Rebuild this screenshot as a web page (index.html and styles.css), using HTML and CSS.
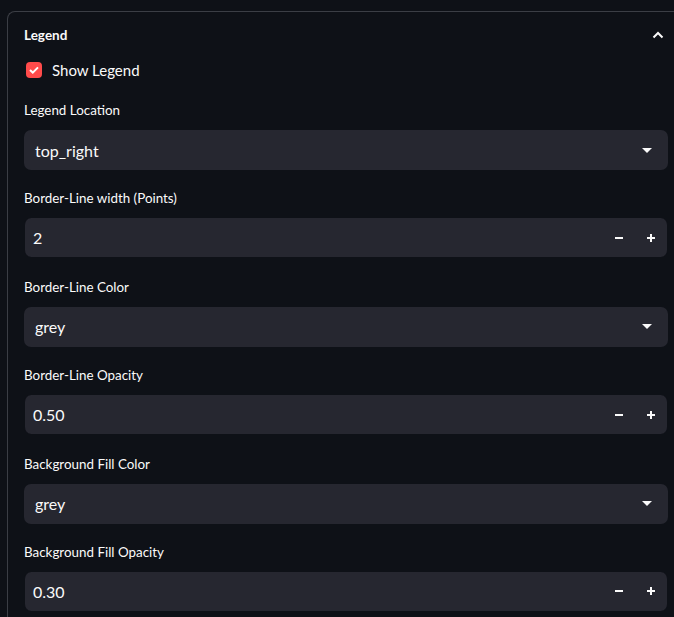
FILE: index.html
```html
<!DOCTYPE html>
<html>
<head>
<meta charset="utf-8">
<link rel="stylesheet" href="styles.css">
</head>
<body>
<div class="expander">
  <div class="exp-header">
    <span class="exp-title">Legend</span>
    <svg class="chevron" width="12" height="8" viewBox="0 0 12 8"><polyline points="1.5,6.5 6,2 10.5,6.5" fill="none" stroke="#fafafa" stroke-width="2"/></svg>
  </div>
  <div class="exp-body">
    <label class="checkbox-row">
      <span class="checkbox">
        <svg width="10" height="8" viewBox="0 0 10 8"><polyline points="1,4 3.8,6.6 9,1.4" fill="none" stroke="#fff" stroke-width="2"/></svg>
      </span>
      <span class="checkbox-label">Show Legend</span>
    </label>

    <div class="field">
      <div class="field-label">Legend Location</div>
      <div class="select"><span>top_right</span><span class="caret"></span></div>
    </div>
    <div class="field">
      <div class="field-label">Border-Line width (Points)</div>
      <div class="number"><span>2</span><span class="steps"><span class="minus"></span><span class="plus"></span></span></div>
    </div>
    <div class="field">
      <div class="field-label">Border-Line Color</div>
      <div class="select"><span>grey</span><span class="caret"></span></div>
    </div>
    <div class="field">
      <div class="field-label">Border-Line Opacity</div>
      <div class="number"><span>0.50</span><span class="steps"><span class="minus"></span><span class="plus"></span></span></div>
    </div>
    <div class="field">
      <div class="field-label">Background Fill Color</div>
      <div class="select"><span>grey</span><span class="caret"></span></div>
    </div>
    <div class="field">
      <div class="field-label">Background Fill Opacity</div>
      <div class="number"><span>0.30</span><span class="steps"><span class="minus"></span><span class="plus"></span></span></div>
    </div>
  </div>
</div>
</body>
</html>
```

FILE: styles.css
```css
html, body {
  margin: 0;
  padding: 0;
  background: #0e1117;
  overflow: hidden;
  height: 617px;
}
body {
  font-family: Lato, "Liberation Sans", sans-serif;
  color: #fafafa;
  padding-top: 11px;
  padding-left: 7px;
}
.expander {
  width: 690px;
  border: 1px solid #3b3e45;
  border-right: none;
  border-bottom: none;
  border-top-left-radius: 8px;
  height: 620px;
  box-sizing: border-box;
}
.exp-header {
  height: 46px;
  display: flex;
  align-items: center;
  padding-left: 16px;
  width: 640px;
  justify-content: space-between;
}
.exp-title {
  font-size: 13.5px;
  font-weight: 700;
}
.chevron {
  display: block;
}
.exp-body {
  padding-left: 16px;
  width: 644px;
}
.checkbox-row {
  display: flex;
  align-items: center;
  height: 24px;
  margin-top: 0;
}
.checkbox {
  width: 16px;
  height: 16px;
  margin-left: 2px;
  border-radius: 4px;
  background: #ff4b4b;
  display: flex;
  align-items: center;
  justify-content: center;
}
.checkbox svg { display: block; }
.checkbox-label {
  margin-left: 10px;
  font-size: 15px;
}
.field {
  margin-top: 18px;
  height: 71px;
}
.field + .field {
  margin-top: 17.4px;
}
.field-label {
  height: 20px;
  line-height: 20px;
  font-size: 13.4px;
  margin-bottom: 10px;
}
.select, .number {
  height: 40px;
  background: #262730;
  border-radius: 7px;
  display: flex;
  align-items: center;
  justify-content: space-between;
  font-size: 16px;
  box-sizing: border-box;
}
.select {
  padding: 0 16px 0 11px;
}
.number {
  padding: 0 12px 0 8px;
  border: 1px solid #0e1117;
  border-width: 0 1px;
  height: 39px;
}
.caret {
  width: 0;
  height: 0;
  border-left: 5px solid transparent;
  border-right: 5px solid transparent;
  border-top: 5px solid #fafafa;
}
.steps {
  display: flex;
  align-items: center;
  gap: 24px;
}
.minus, .plus {
  position: relative;
  width: 8px;
  height: 8px;
  display: block;
}
.minus::before, .plus::before, .plus::after {
  content: "";
  position: absolute;
  background: #fafafa;
}
.minus::before, .plus::before {
  left: 0; top: 3px; width: 8px; height: 2px;
}
.plus::after {
  left: 3px; top: 0; width: 2px; height: 8px;
}
```
